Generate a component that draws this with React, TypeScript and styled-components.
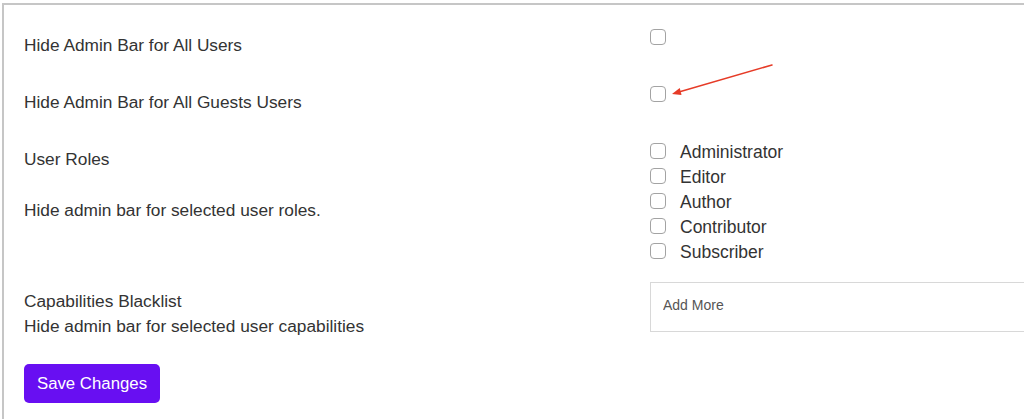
import styled, { createGlobalStyle } from "styled-components";

const GlobalStyle = createGlobalStyle`
  html, body {
    margin: 0;
    padding: 0;
    background: #fff;
    overflow: hidden;
  }
  body {
    font-family: "Liberation Sans", Arial, sans-serif;
    color: #333;
  }
`;

const Page = styled.div`
  padding: 3px 0 0 2px;
  height: 100vh;
  box-sizing: border-box;
`;

const Frame = styled.div`
  border-top: 2px solid #c6c6c6;
  border-left: 2px solid #c6c6c6;
  height: 100%;
  padding-left: 20px;
  box-sizing: border-box;
`;

const Form = styled.form`
  display: flex;
  flex-direction: column;
`;

const Row = styled.div<{ $minHeight: number }>`
  display: grid;
  grid-template-columns: 626px 1fr;
  min-height: ${(p) => p.$minHeight}px;
`;

const LabelCell = styled.div<{ $top: number; $lineHeight?: number }>`
  padding-top: ${(p) => p.$top}px;
  font-size: 17.3px;
  line-height: ${(p) => p.$lineHeight ?? 20}px;
  color: #333;
`;

const Description = styled.div`
  margin-top: 31px;
`;

const ControlCell = styled.div<{ $top: number }>`
  position: relative;
  padding-top: ${(p) => p.$top}px;
`;

const Checkbox = styled.input.attrs({ type: "checkbox" })`
  appearance: none;
  display: block;
  flex: none;
  margin: 0;
  width: 16px;
  height: 16px;
  border: 1px solid #a3a3a3;
  border-radius: 4px;
  background: #fff;
  box-sizing: border-box;
`;

const RoleList = styled.div`
  display: flex;
  flex-direction: column;
  gap: 9px;
`;

const RoleItem = styled.label`
  display: flex;
  align-items: center;
  gap: 14px;
  height: 16px;
  font-size: 17.5px;
  line-height: 16px;
  color: #333;

  span {
    position: relative;
    top: 1px;
  }
`;

const TagInput = styled.input`
  display: block;
  width: 420px;
  height: 50px;
  margin: 0;
  padding: 0 12px 5px;
  border: 1px solid #d8d8d8;
  border-radius: 0;
  box-sizing: border-box;
  font-family: "Liberation Sans", Arial, sans-serif;
  font-size: 14px;
  color: #50575e;
  background: #fff;

  &::placeholder {
    color: #555;
  }
`;

const SaveButton = styled.button`
  margin-top: 25px;
  width: 136px;
  height: 39px;
  border: none;
  border-radius: 5px;
  background: #680ff2;
  color: #fff;
  font-family: "Liberation Sans", Arial, sans-serif;
  font-size: 16.8px;
  cursor: pointer;
`;

const Arrow = styled.svg`
  position: absolute;
  left: 0;
  top: 0;
  width: 130px;
  height: 40px;
  overflow: visible;
  pointer-events: none;
`;

const roles = ["Administrator", "Editor", "Author", "Contributor", "Subscriber"];

const App = () => {
  return (
    <Page>
      <GlobalStyle />
      <Frame>
        <Form onSubmit={(e) => e.preventDefault()}>
          <Row $minHeight={57}>
            <LabelCell $top={29.5}>Hide Admin Bar for All Users</LabelCell>
            <ControlCell $top={24}>
              <Checkbox />
            </ControlCell>
          </Row>
          <Row $minHeight={57}>
            <LabelCell $top={30}>Hide Admin Bar for All Guests Users</LabelCell>
            <ControlCell $top={24}>
              <Checkbox />
              <Arrow viewBox="0 0 130 40">
                <line
                  x1="122"
                  y1="3"
                  x2="30.6"
                  y2="29.5"
                  stroke="#e63b27"
                  strokeWidth="1.5"
                  strokeLinecap="round"
                />
                <polygon points="22,32 31.6,32.9 29.7,26.1" fill="#e63b27" />
              </Arrow>
            </ControlCell>
          </Row>
          <Row $minHeight={144}>
            <LabelCell $top={29.5}>
              User Roles
              <Description>Hide admin bar for selected user roles.</Description>
            </LabelCell>
            <ControlCell $top={24}>
              <RoleList>
                {roles.map((role) => (
                  <RoleItem key={role}>
                    <Checkbox />
                    <span>{role}</span>
                  </RoleItem>
                ))}
              </RoleList>
            </ControlCell>
          </Row>
          <Row $minHeight={76}>
            <LabelCell $top={26} $lineHeight={25}>
              Capabilities Blacklist
              <br />
              Hide admin bar for selected user capabilities
            </LabelCell>
            <ControlCell $top={19}>
              <TagInput placeholder="Add More" />
            </ControlCell>
          </Row>
          <div>
            <SaveButton type="submit">Save Changes</SaveButton>
          </div>
        </Form>
      </Frame>
    </Page>
  );
};

export default App;
